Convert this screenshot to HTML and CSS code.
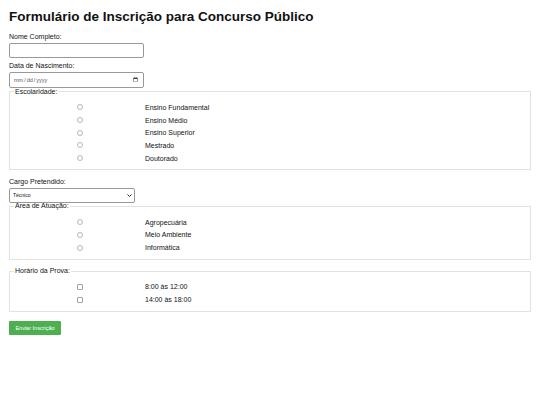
FILE: index.html
```html
<!DOCTYPE html>
<html>
<head>
  <meta charset="utf-8">
  <title>Formulário de Inscrição</title>
  <link rel="stylesheet" href="styles.css">
</head>
<body>

  <h1>Formulário de Inscrição para Concurso Público</h1>

  <form>
    <label for="nome" class="fieldLabel">Nome Completo:</label>
    <input type="text" id="nome" class="textInput">

    <label for="nascimento" class="fieldLabel">Data de Nascimento:</label>
    <input type="date" id="nascimento" class="textInput dateInput">

    <fieldset class="group">
      <legend>Escolaridade:</legend>
      <label class="option"><input type="radio" name="escolaridade"><span>Ensino Fundamental</span></label>
      <label class="option"><input type="radio" name="escolaridade"><span>Ensino Médio</span></label>
      <label class="option"><input type="radio" name="escolaridade"><span>Ensino Superior</span></label>
      <label class="option"><input type="radio" name="escolaridade"><span>Mestrado</span></label>
      <label class="option"><input type="radio" name="escolaridade"><span>Doutorado</span></label>
    </fieldset>

    <label for="cargo" class="fieldLabel">Cargo Pretendido:</label>
    <div class="selectWrap">
      <select id="cargo" class="selectInput">
        <option>Técnico</option>
        <option>Analista</option>
        <option>Assistente</option>
      </select>
      <svg class="selectArrow" viewBox="0 0 10 6" width="5" height="3">
        <path d="M1 1 L5 5 L9 1" fill="none" stroke="#222" stroke-width="2"/>
      </svg>
    </div>

    <fieldset class="group">
      <legend>Área de Atuação:</legend>
      <label class="option"><input type="radio" name="area"><span>Agropecuária</span></label>
      <label class="option"><input type="radio" name="area"><span>Meio Ambiente</span></label>
      <label class="option"><input type="radio" name="area"><span>Informática</span></label>
    </fieldset>

    <fieldset class="group">
      <legend>Horário da Prova:</legend>
      <label class="option"><input type="checkbox" name="horario"><span>8:00 às 12:00</span></label>
      <label class="option"><input type="checkbox" name="horario"><span>14:00 às 18:00</span></label>
    </fieldset>

    <button type="submit" id="enviarButton">Enviar Inscrição</button>
  </form>

</body>
</html>
```

FILE: styles.css
```css
* {
  box-sizing: border-box;
}

body {
  font-family: "Liberation Sans", Arial, sans-serif;
  margin: 0;
  padding: 0 9px;
  color: #111;
  background: #fff;
}

h1 {
  font-size: 13.5px;
  line-height: 16px;
  margin: 9px 0 7px 0;
}

.fieldLabel {
  display: block;
  font-size: 7px;
  line-height: 9px;
  margin-bottom: 1.5px;
}

.textInput {
  display: block;
  width: 135px;
  height: 15px;
  margin: 0 0 3.5px 0;
  padding: 0 3px;
  border: 1px solid #999;
  border-radius: 2px;
  font-size: 5.5px;
  font-family: "Liberation Sans", Arial, sans-serif;
}

.dateInput {
  height: 16px;
  margin-bottom: 0;
  color: #555;
}

/* groups of radios and checkboxes */
.group {
  margin: 0 0 7px 0;
  padding: 5.5px 6px 5px 4px;
  border: 1px solid #e2e2e2;
}

.group legend {
  font-size: 7px;
  line-height: 8px;
  padding: 0 1px;
}

.option {
  display: grid;
  grid-template-columns: 131px 1fr;
  align-items: center;
  height: 12.7px;
  font-size: 7px;
  color: #111;
}

.option input {
  appearance: none;
  -webkit-appearance: none;
  justify-self: center;
  width: 6px;
  height: 6px;
  margin: 0;
  border: 1px solid #b8b8b8;
  background: #fff;
}

.option input[type="radio"] {
  border-radius: 50%;
}

.option input[type="checkbox"] {
  border-radius: 1px;
  border-color: #a0a0a0;
}

.selectWrap {
  position: relative;
  width: 126px;
  margin-bottom: -0.5px;
}

.selectInput {
  appearance: none;
  -webkit-appearance: none;
  display: block;
  width: 126px;
  height: 15px;
  padding: 0 3px;
  font-size: 5px;
  font-family: "Liberation Sans", Arial, sans-serif;
  color: #111;
  border: 1px solid #999;
  border-radius: 2px;
  background: #fff;
}

.selectArrow {
  position: absolute;
  right: 3px;
  top: 6px;
}

#enviarButton {
  display: block;
  margin-top: 9px;
  background: #4caf50;
  color: white;
  border: none;
  border-radius: 1px;
  font-size: 5.5px;
  font-family: "Liberation Sans", Arial, sans-serif;
  width: 52px;
  height: 14px;
  padding: 0;
  cursor: pointer;
}
```
